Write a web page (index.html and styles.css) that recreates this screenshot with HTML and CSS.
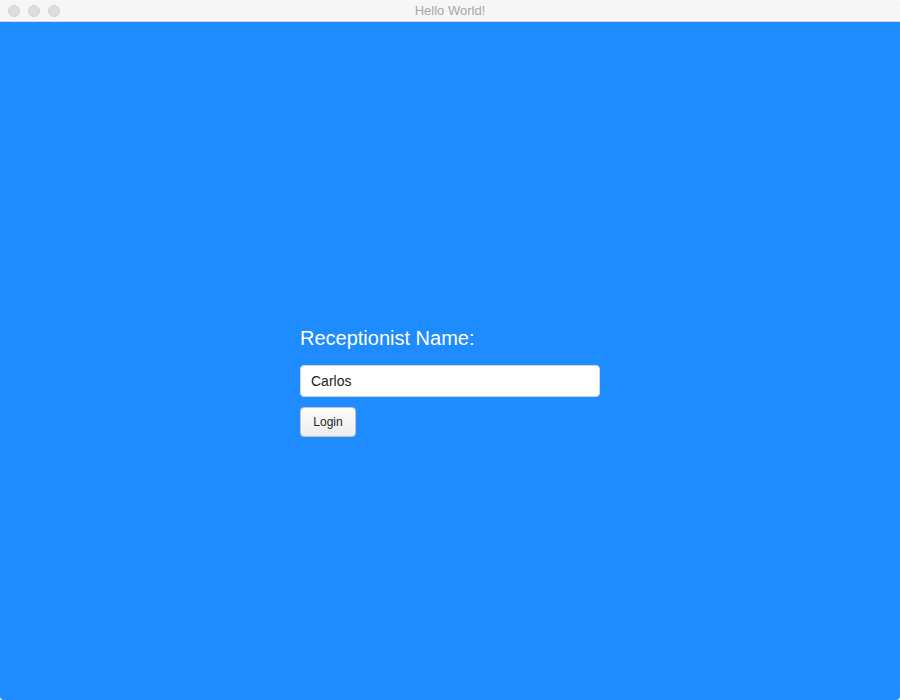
FILE: index.html
```html
<!DOCTYPE html>
<html lang="en">
<head>
<meta charset="utf-8">
<title>Hello World!</title>
<link rel="stylesheet" href="styles.css">
</head>
<body>
<div class="window">
  <header class="titlebar">
    <div class="lights">
      <span class="light"></span>
      <span class="light"></span>
      <span class="light"></span>
    </div>
    <div class="title">Hello World!</div>
  </header>
  <main class="content">
    <form class="login">
      <label class="label" for="name">Receptionist Name:</label>
      <input class="field" id="name" type="text" value="Carlos">
      <div class="actions">
        <button class="btn" type="button">Login</button>
      </div>
    </form>
  </main>
</div>
</body>
</html>
```

FILE: styles.css
```css
html, body {
  margin: 0;
  padding: 0;
  background: #ffffff;
}

body {
  width: 900px;
  height: 700px;
  overflow: hidden;
  font-family: "Liberation Sans", Arial, Helvetica, sans-serif;
}

.window {
  width: 900px;
  height: 700px;
  display: flex;
  flex-direction: column;
  border-radius: 4px;
  overflow: hidden;
}

.titlebar {
  height: 21px;
  flex: 0 0 21px;
  background: #f6f6f6;
  border-bottom: 1px solid #d6d6d6;
  display: grid;
  grid-template-columns: 1fr;
  align-items: center;
}

.lights {
  display: flex;
  gap: 8px;
  padding-left: 8px;
  grid-area: 1 / 1;
}

.light {
  width: 12px;
  height: 12px;
  border-radius: 50%;
  background: #dcdcdc;
  box-sizing: border-box;
  border: 1px solid #d3d3d3;
}

.title {
  grid-area: 1 / 1;
  text-align: center;
  font-size: 13px;
  color: #a6a6a6;
  line-height: 22px;
}

.content {
  flex: 1;
  background: #1e8bff;
  display: flex;
  justify-content: center;
  padding-top: 304px;
}

.login {
  width: 300px;
  display: flex;
  flex-direction: column;
  margin: 0;
}

.label {
  font-size: 20px;
  line-height: 24px;
  color: #ffffff;
  margin-bottom: 15px;
}

.field {
  box-sizing: border-box;
  width: 300px;
  height: 32px;
  margin: 0;
  padding: 0 10px;
  border: 1px solid #cfd6de;
  border-radius: 4px;
  background: #ffffff;
  font-family: "Liberation Sans", Arial, Helvetica, sans-serif;
  font-size: 14px;
  color: #222222;
  outline: none;
}

.actions {
  display: flex;
  margin-top: 10px;
}

.btn {
  box-sizing: border-box;
  min-width: 56px;
  height: 30px;
  padding: 0 12px;
  margin: 0;
  border: 1px solid #c4c4c4;
  border-radius: 4px;
  background: linear-gradient(#fdfdfd, #ececec);
  font-family: "Liberation Sans", Arial, Helvetica, sans-serif;
  font-size: 12px;
  color: #222222;
}
```
